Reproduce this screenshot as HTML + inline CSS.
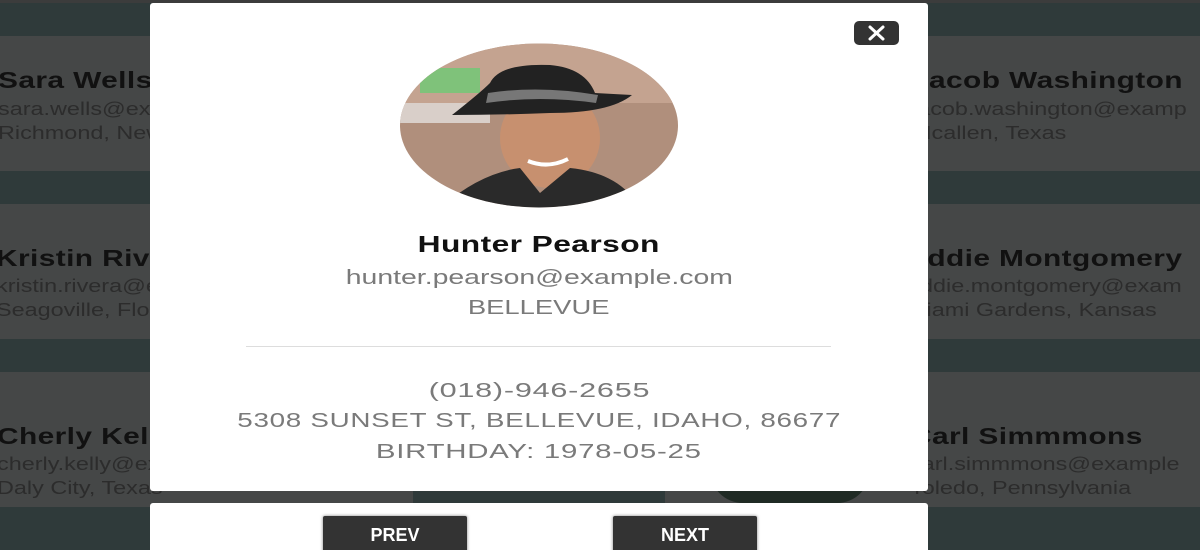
<!DOCTYPE html>
<html><head><meta charset="utf-8"><style>
*{margin:0;padding:0;box-sizing:border-box}
html,body{width:1200px;height:550px;overflow:hidden}
body{position:relative;background:#2f3a3a;font-family:"Liberation Sans",sans-serif}
.wrap{position:absolute;left:0;top:0;width:1200px;height:550px;overflow:hidden}
.abs{position:absolute}
.card{position:absolute;height:135px;background:#454747}
.n{position:absolute;font-size:23px;font-weight:bold;color:#111;white-space:nowrap;letter-spacing:0.3px;transform:scaleX(1.3);transform-origin:left center}
.e{position:absolute;font-size:18px;color:#2c2c2c;white-space:nowrap;transform:scaleX(1.3);transform-origin:left center}
.modal{position:absolute;left:150px;top:3px;width:778px;height:488px;background:#fff;border-radius:3px;text-align:center;color:#7a7a7a}
.t{position:absolute;left:0;width:100%;white-space:nowrap}
.t span{display:inline-block;transform-origin:center center}
.btn{position:absolute;top:516px;width:144px;height:40px;background:#333;color:#fff;font-size:18px;font-weight:bold;text-align:center;line-height:38px;border-radius:2px;box-shadow:0 0 3px rgba(0,0,0,.5)}
</style></head><body>
<div class="wrap">
<div class="abs" style="left:0;top:0;width:1200px;height:3px;background:#3c3c3c"></div>
<div class="card" style="left:0;top:36px;width:413px"></div>
<div class="card" style="left:0;top:204px;width:413px"></div>
<div class="card" style="left:0;top:372px;width:413px"></div>
<div class="card" style="left:665px;top:36px;width:535px"></div>
<div class="card" style="left:665px;top:204px;width:535px"></div>
<div class="card" style="left:665px;top:372px;width:535px"></div>
<div class="abs" style="left:710px;top:470px;width:160px;height:33px;background:#1f2a24;border-radius:0 0 40px 40px"></div>

<div class="n" style="left:-2px;top:67px">Sara Wells</div>
<div class="e" style="left:-2px;top:99px">sara.wells@example.com</div>
<div class="e" style="left:-2px;top:123px">Richmond, New York</div>
<div class="n" style="left:-4px;top:245px">Kristin Rivera</div>
<div class="e" style="left:-4px;top:276px">kristin.rivera@example.com</div>
<div class="e" style="left:-4px;top:300px">Seagoville, Florida</div>
<div class="n" style="left:-3px;top:423px">Cherly Kelly</div>
<div class="e" style="left:-3px;top:454px">cherly.kelly@example.com</div>
<div class="e" style="left:-3px;top:478px">Daly City, Texas</div>

<div class="n" style="left:912px;top:67px">Jacob Washington</div>
<div class="e" style="left:912px;top:99px">jacob.washington@examp</div>
<div class="e" style="left:912px;top:123px">Mcallen, Texas</div>
<div class="n" style="left:907px;top:245px">Eddie Montgomery</div>
<div class="e" style="left:907px;top:276px">eddie.montgomery@exam</div>
<div class="e" style="left:907px;top:300px">Miami Gardens, Kansas</div>
<div class="n" style="left:910px;top:423px">Carl Simmmons</div>
<div class="e" style="left:910px;top:454px">carl.simmmons@example</div>
<div class="e" style="left:910px;top:478px">Toledo, Pennsylvania</div>
</div>

<div class="modal">
  <div class="abs" style="left:704px;top:18px;width:45px;height:24px;background:#333;border-radius:5px">
    <svg width="45" height="24" viewBox="0 0 45 24"><path d="M16 6L29 18M29 6L16 18" stroke="#fff" stroke-width="3" stroke-linecap="round"/></svg>
  </div>
  <svg class="abs" style="left:250px;top:40px" width="278" height="165" viewBox="0 0 278 165">
    <defs><clipPath id="c"><ellipse cx="139" cy="82.5" rx="139" ry="82"/></clipPath></defs>
    <g clip-path="url(#c)">
      <rect width="278" height="165" fill="#b08f7c"/>
      <rect x="0" y="0" width="278" height="60" fill="#c4a390"/>
      <rect x="20" y="25" width="60" height="25" fill="#7fc27a"/>
      <rect x="0" y="60" width="90" height="20" fill="#d9cfc9"/>
      <ellipse cx="150" cy="95" rx="50" ry="50" fill="#c7906f"/>
      <path d="M40 165 Q80 130 120 125 L140 150 L170 125 Q220 130 240 165Z" fill="#2a2a2a"/>
      <path d="M52 72 Q80 50 90 40 Q100 20 150 22 Q185 25 195 50 L232 52 Q210 70 150 70 Q100 72 52 72Z" fill="#222"/>
      <path d="M88 50 Q140 42 198 52 L196 60 Q140 52 86 60Z" fill="#777"/>
      <path d="M128 118 Q148 126 168 116" stroke="#fff" stroke-width="4" fill="none"/>
    </g>
  </svg>
  <div class="t" style="top:228px;font-size:23px;font-weight:bold;color:#111;letter-spacing:0.3px"><span style="transform:scaleX(1.38)">Hunter Pearson</span></div>
  <div class="t" style="top:264px;font-size:20px"><span style="transform:scaleX(1.42)">hunter.pearson@example.com</span></div>
  <div class="t" style="top:294px;font-size:20px"><span style="transform:scaleX(1.37)">BELLEVUE</span></div>
  <div class="abs" style="left:96px;top:343px;width:585px;height:1px;background:#ddd"></div>
  <div class="t" style="top:377px;font-size:20px;letter-spacing:0.5px"><span style="transform:scaleX(1.53)">(018)-946-2655</span></div>
  <div class="t" style="top:407px;font-size:20px;letter-spacing:0.5px"><span style="transform:scaleX(1.39)">5308 SUNSET ST, BELLEVUE, IDAHO, 86677</span></div>
  <div class="t" style="top:438px;font-size:20px;letter-spacing:0.5px"><span style="transform:scaleX(1.47)">BIRTHDAY: 1978-05-25</span></div>
</div>
<div class="abs" style="left:150px;top:503px;width:778px;height:47px;background:#fff;border-radius:3px 3px 0 0"></div>
<div class="btn" style="left:323px">PREV</div>
<div class="btn" style="left:613px">NEXT</div>
</body></html>
